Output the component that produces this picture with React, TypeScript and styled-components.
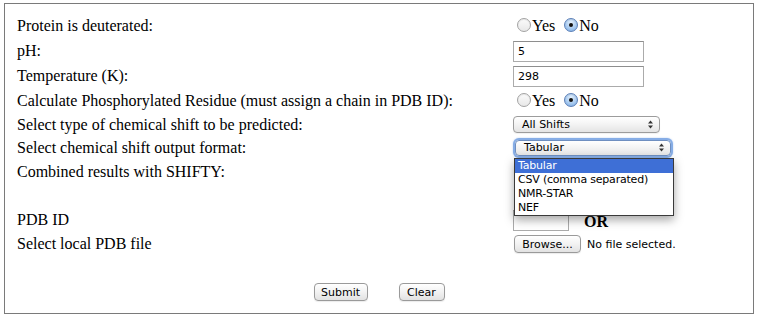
import React from "react";
import styled, { createGlobalStyle } from "styled-components";

const GlobalStyle = createGlobalStyle`
  html, body {
    margin: 0;
    padding: 0;
    background: #ffffff;
  }
  body {
    font-family: "Liberation Serif", "Times New Roman", serif;
    font-size: 16px;
    color: #000;
  }
`;

const Page = styled.div`
  padding: 3px 5px 0 4px;
`;

const FormBox = styled.form`
  width: 750px;
  box-sizing: border-box;
  border: 1px solid #7a7a7a;
  padding: 9px 0 12px 0;
`;

const FieldGrid = styled.div`
  display: grid;
  grid-template-columns: 496px 1fr;
  grid-template-rows: 24px 26px 25px 24px 24px 23px 24px 24px 24px 24px;
  align-items: center;
  padding-left: 12px;
`;

const Label = styled.div`
  line-height: 19px;
  white-space: nowrap;
`;

const Control = styled.div`
  display: flex;
  align-items: center;
  height: 100%;
`;

const RadioGroup = styled.div`
  display: flex;
  align-items: center;
  gap: 9px;
  padding-left: 4px;
`;

const RadioOption = styled.label`
  display: inline-flex;
  align-items: center;
  line-height: 19px;
`;

const RadioDot = styled.span<{ $checked?: boolean }>`
  width: 14px;
  height: 14px;
  box-sizing: border-box;
  border-radius: 50%;
  display: inline-flex;
  align-items: center;
  justify-content: center;
  margin-right: 1px;
  border: 1px solid ${(p) => (p.$checked ? "#5b7fb8" : "#a3a3a3")};
  background: ${(p) =>
    p.$checked
      ? "radial-gradient(circle at 50% 30%, #e4f0fc 0%, #a9cbf0 55%, #74a6e0 100%)"
      : "linear-gradient(#fbfbfb, #e8e8e8)"};
  box-shadow: inset 0 1px 1px rgba(0, 0, 0, 0.08);

  &::after {
    content: "";
    width: 4px;
    height: 4px;
    border-radius: 50%;
    background: #111;
    display: ${(p) => (p.$checked ? "block" : "none")};
  }
`;

const TextInput = styled.div<{ $w: number }>`
  width: ${(p) => p.$w}px;
  height: 21px;
  box-sizing: border-box;
  margin-top: 2px;
  border: 1px solid #ababab;
  border-top-color: #8e8e8e;
  background: #fff;
  padding: 0 4px;
  display: flex;
  align-items: center;
  font: 11px "DejaVu Sans", "Verdana", sans-serif;
  color: #000;
`;

const SelectWrap = styled.div<{ $inset?: number }>`
  position: relative;
  margin-left: ${(p) => p.$inset ?? 0}px;
`;

const SelectBox = styled.div<{ $w: number; $h: number; $focus?: boolean }>`
  width: ${(p) => p.$w}px;
  height: ${(p) => p.$h}px;
  box-sizing: border-box;
  border: 1px solid ${(p) => (p.$focus ? "#6f8fc0" : "#9c9c9c")};
  border-radius: 4px;
  background: linear-gradient(#ffffff, #f3f3f3 50%, #e4e4e4);
  display: flex;
  align-items: center;
  justify-content: space-between;
  padding: 0 6px 0 8px;
  font: 11px "DejaVu Sans", "Verdana", sans-serif;
  color: #000;
  box-shadow: ${(p) =>
    p.$focus ? "0 0 0 2px #86ade6, 0 0 2px 2px #b5cdf0" : "0 1px 1px rgba(0, 0, 0, 0.06)"};
`;

const Menu = styled.ul`
  position: absolute;
  top: 18px;
  left: -1px;
  width: 160px;
  box-sizing: border-box;
  margin: 0;
  padding: 0;
  list-style: none;
  background: #fff;
  border: 1px solid #3a3a3a;
  box-shadow: 0 4px 9px rgba(0, 0, 0, 0.35);
  z-index: 5;
`;

const MenuItem = styled.li<{ $active?: boolean }>`
  height: 14px;
  padding-left: 3px;
  font: 11px "DejaVu Sans", "Verdana", sans-serif;
  line-height: 14px;
  letter-spacing: -0.2px;
  white-space: nowrap;
  color: ${(p) => (p.$active ? "#fff" : "#000")};
  background: ${(p) => (p.$active ? "#3e6fd6" : "transparent")};
`;

const OrText = styled.span`
  font-weight: bold;
  margin-left: 15px;
  margin-top: 6px;
`;

const MacButton = styled.button<{ $w: number }>`
  width: ${(p) => p.$w}px;
  height: 18px;
  box-sizing: border-box;
  padding: 0;
  border: 1px solid #9a9a9a;
  border-radius: 4px;
  background: linear-gradient(#ffffff, #f2f2f2 50%, #e2e2e2);
  font: 11px "DejaVu Sans", "Verdana", sans-serif;
  color: #000;
  box-shadow: 0 1px 1px rgba(0, 0, 0, 0.08);
`;

const FileRow = styled.div`
  display: flex;
  align-items: center;
  gap: 6px;
  padding-left: 1px;
  margin-top: 2px;
`;

const FileNote = styled.span`
  font: 11px "DejaVu Sans", "Verdana", sans-serif;
`;

const ButtonRow = styled.div`
  display: flex;
  justify-content: center;
  gap: 31px;
  margin-top: 28px;
`;

const Arrows = () => (
  <svg width="5" height="9" viewBox="0 0 5 9">
    <path d="M0 3.5 L2.5 0.5 L5 3.5 Z" fill="#333" />
    <path d="M0 5.5 L2.5 8.5 L5 5.5 Z" fill="#333" />
  </svg>
);

const YesNo = () => (
  <RadioGroup>
    <RadioOption>
      <RadioDot />
      Yes
    </RadioOption>
    <RadioOption>
      <RadioDot $checked />
      No
    </RadioOption>
  </RadioGroup>
);

const formats = ["Tabular", "CSV (comma separated)", "NMR-STAR", "NEF"];

export default function App() {
  return (
    <Page>
      <GlobalStyle />
      <FormBox onSubmit={(e) => e.preventDefault()}>
        <FieldGrid>
          <Label>Protein is deuterated:</Label>
          <Control>
            <YesNo />
          </Control>

          <Label>pH:</Label>
          <Control>
            <TextInput $w={131}>5</TextInput>
          </Control>

          <Label>Temperature (K):</Label>
          <Control>
            <TextInput $w={131}>298</TextInput>
          </Control>

          <Label>Calculate Phosphorylated Residue (must assign a chain in PDB ID):</Label>
          <Control>
            <YesNo />
          </Control>

          <Label>Select type of chemical shift to be predicted:</Label>
          <Control>
            <SelectBox $w={147} $h={17}>
              All Shifts
              <Arrows />
            </SelectBox>
          </Control>

          <Label>Select chemical shift output format:</Label>
          <Control>
            <SelectWrap $inset={2}>
              <SelectBox $w={156} $h={16} $focus>
                Tabular
                <Arrows />
              </SelectBox>
              <Menu>
                {formats.map((f, i) => (
                  <MenuItem key={f} $active={i === 0}>
                    {f}
                  </MenuItem>
                ))}
              </Menu>
            </SelectWrap>
          </Control>

          {/* the SHIFTY choice sits under the open menu */}
          <Label>Combined results with SHIFTY:</Label>
          <Control />

          <Label />
          <Control />

          <Label>PDB ID</Label>
          <Control>
            <TextInput $w={56} />
            <OrText>OR</OrText>
          </Control>

          <Label>Select local PDB file</Label>
          <Control>
            <FileRow>
              <MacButton type="button" $w={67}>
                Browse...
              </MacButton>
              <FileNote>No file selected.</FileNote>
            </FileRow>
          </Control>
        </FieldGrid>

        <ButtonRow>
          <MacButton type="submit" $w={54}>
            Submit
          </MacButton>
          <MacButton type="reset" $w={46}>
            Clear
          </MacButton>
        </ButtonRow>
      </FormBox>
    </Page>
  );
}
